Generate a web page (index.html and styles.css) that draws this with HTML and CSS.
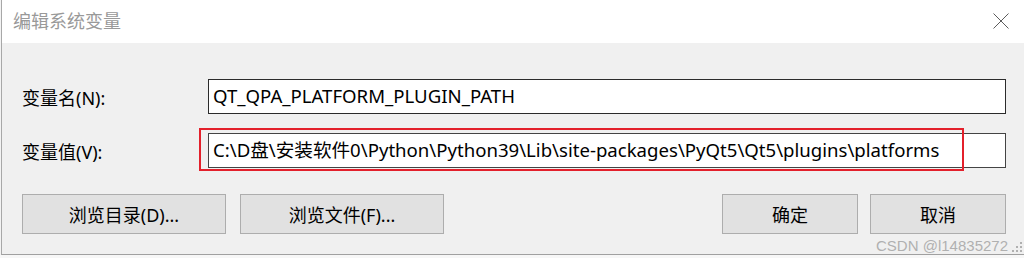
FILE: index.html
```html
<!DOCTYPE html>
<html lang="zh-CN">
<head>
    <meta charset="UTF-8">
    <meta name="viewport" content="width=device-width, initial-scale=1.0">
    <title>编辑系统变量</title>
    <link rel="stylesheet" href="styles.css">
</head>
<body>

    <div class="dialog">
        <div class="titlebar">
            <span class="title">编辑系统变量</span>
            <svg class="close" width="16" height="16" viewBox="0 0 16 16">
                <path d="M0.5 0.5 L15.5 15.5 M15.5 0.5 L0.5 15.5" stroke="#5c5c5c" stroke-width="1" fill="none"/>
            </svg>
        </div>

        <div class="content">
            <div class="field-row">
                <label class="field-label">变量名(N):</label>
                <div class="field-box">QT_QPA_PLATFORM_PLUGIN_PATH</div>
            </div>
            <div class="field-row">
                <label class="field-label">变量值(V):</label>
                <div class="field-box field-value">
                    C:\D盘\安装软件0\Python\Python39\Lib\site-packages\PyQt5\Qt5\plugins\platforms
                    <div class="highlight"></div>
                </div>
            </div>

            <div class="button-row">
                <div class="button-group">
                    <button class="btn btn-wide">浏览目录(D)...</button>
                    <button class="btn btn-wide">浏览文件(F)...</button>
                </div>
                <div class="button-group right">
                    <button class="btn">确定</button>
                    <button class="btn">取消</button>
                </div>
            </div>
        </div>

        <div class="watermark">CSDN @l14835272</div>
        <svg class="grip" width="11" height="11" viewBox="0 0 11 11">
            <rect x="8" y="0" width="2" height="2" fill="#b0b0b0"/>
            <rect x="4" y="4" width="2" height="2" fill="#b0b0b0"/>
            <rect x="8" y="4" width="2" height="2" fill="#b0b0b0"/>
            <rect x="0" y="8" width="2" height="2" fill="#b0b0b0"/>
            <rect x="4" y="8" width="2" height="2" fill="#b0b0b0"/>
            <rect x="8" y="8" width="2" height="2" fill="#b0b0b0"/>
        </svg>
    </div>
    <div class="under"></div>

</body>
</html>
```

FILE: styles.css
```css
body, html {
    margin: 0;
    padding: 0;
    width: 1024px;
    height: 258px;
    overflow: hidden;
    background: #f3f3f3;
    font-family: "Noto Sans", "Noto Sans CJK SC", sans-serif;
}

.dialog {
    position: relative;
    margin-left: 1px;
    height: 255px;
    border-left: 1px solid #a8a8a8;
    border-bottom: 1px solid #a0a0a0;
    background: #f0f0f0;
    box-sizing: border-box;
}

.titlebar {
    height: 43px;
    background: #ffffff;
    display: flex;
    align-items: center;
    justify-content: space-between;
    padding: 0 15px 0 11px;
}

.title {
    font-size: 18px;
    color: #999999;
    margin-top: -4px;
}

.close {
    margin-top: -1px;
}

.content {
    padding: 36px 18px 0 20px;
}

.field-row {
    display: flex;
    align-items: center;
    margin-bottom: 19px;
}

.field-label {
    width: 186px;
    font-size: 18px;
    color: #000;
}

.field-box {
    position: relative;
    flex: 1;
    height: 35px;
    box-sizing: border-box;
    border: 1px solid #2b2b2b;
    background: #ffffff;
    padding: 0 4px;
    font-size: 18.6px;
    line-height: 32px;
    color: #000;
    white-space: nowrap;
}

.field-value {
    border-color: #444444;
}

.highlight {
    position: absolute;
    left: -10px;
    top: -6px;
    width: 765px;
    height: 43px;
    border: 2px solid #e3202b;
    box-sizing: border-box;
}

.button-row {
    display: flex;
    justify-content: space-between;
    margin-top: 26px;
}

.button-group {
    display: flex;
    gap: 14px;
}

.button-group.right {
    gap: 12px;
}

.btn {
    width: 136px;
    height: 40px;
    border: 1px solid #adadad;
    background: #e1e1e1;
    font-family: "Noto Sans", "Noto Sans CJK SC", sans-serif;
    font-size: 18px;
    color: #000;
    padding: 0;
}

.btn-wide {
    width: 204px;
}

.watermark {
    position: absolute;
    right: 16px;
    bottom: 0;
    font-family: "Liberation Sans", Arial, sans-serif;
    font-size: 15px;
    color: #b0b0b0;
    line-height: 17px;
}

.grip {
    position: absolute;
    right: 1px;
    bottom: 1px;
}

.under {
    height: 3px;
    background: #f7f7f7;
}
```
